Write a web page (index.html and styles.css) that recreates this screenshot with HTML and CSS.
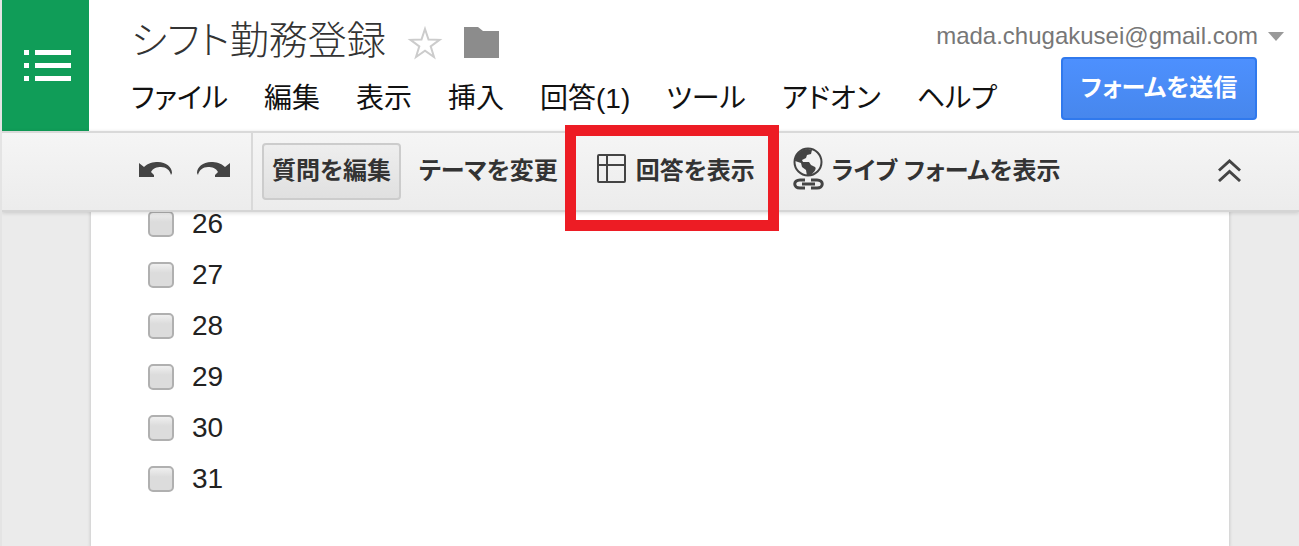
FILE: index.html
```html
<!DOCTYPE html>
<html lang="ja">
    <head>
        <meta charset="utf-8">
        <title>シフト勤務登録</title>
        <link rel="stylesheet" href="styles.css">
    </head>

    <body>
        <header class="header">
            <a class="logo" href="#" aria-label="フォーム">
                <svg width="48" height="34" viewBox="0 0 48 34" fill="#fff">
                    <path d="M0 1h5v5H0zM11 1h36v5H11zM0 14h5v5H0zM11 14h36v5H11zM0 27h5v5H0zM11 27h36v5H11z"/>
                </svg>
            </a>

            <div class="heading">
                <div class="title-row">
                    <h1>シフト勤務登録</h1>
                    <button class="icon-btn" aria-label="スター">
                        <svg width="36" height="36" viewBox="0 0 36 36">
                            <path d="M18 5l3.500 10.500 11 .3-8.800 6.600 3.300 10.600L18 26.800l-9 6.200 3.300-10.600L3.500 15.800l11-.3z" fill="none" stroke="#ccc" stroke-width="2"/>
                        </svg>
                    </button>
                    <button class="icon-btn" aria-label="フォルダ">
                        <svg width="36" height="32" viewBox="0 0 36 32">
                            <path d="M0 1h14l5 4h16v27H0z" fill="#8c8c8c"/>
                        </svg>
                    </button>
                    <button class="user">
                        mada.chugakusei@gmail.com
                        <svg width="16" height="10" viewBox="0 0 16 10"><path d="M0 1h16L8 10z" fill="#999"/></svg>
                    </button>
                </div>
                <div class="menu-row">
                    <nav class="menu">
                        <a href="#">ファイル</a>
                        <a href="#">編集</a>
                        <a href="#">表示</a>
                        <a href="#">挿入</a>
                        <a href="#">回答(1)</a>
                        <a href="#">ツール</a>
                        <a href="#">アドオン</a>
                        <a href="#">ヘルプ</a>
                    </nav>
                    <button class="send">フォームを送信</button>
                </div>
            </div>
        </header>

        <div class="toolbar">
            <div class="history">
                <button class="icon-btn" aria-label="元に戻す">
                    <svg width="34" height="18" viewBox="0 0 34 18">
                        <path d="M0 2l5 4C9 2 14 1 19 1c8 0 14 5 14 11l-1 2c-1-5-5-8-10-8-4 0-8 1-10 5l3 3v2H0z" fill="#444"/>
                    </svg>
                </button>
                <button class="icon-btn" aria-label="やり直し">
                    <svg width="34" height="18" viewBox="0 0 34 18">
                        <path d="M34 2l-5 4C25 2 20 1 15 1 7 1 1 6 1 12l1 2c1-5 5-8 10-8 4 0 8 1 10 5l-3 3v2h15z" fill="#444"/>
                    </svg>
                </button>
            </div>
            <div class="tools">
                <button class="tool active">質問を編集</button>
                <button class="tool">テーマを変更</button>
                <button class="tool responses">
                    <svg width="30" height="30" viewBox="0 0 30 30" fill="none" stroke="#444" stroke-width="2">
                        <rect x="1" y="1" width="27" height="27" rx="1"/>
                        <path d="M1 11h27M10 1v27"/>
                    </svg>
                    回答を表示
                    <span class="highlight"></span>
                </button>
                <button class="tool live">
                    <svg width="31" height="43" viewBox="0 0 31 43" fill="none" stroke="#444">
                        <circle cx="15" cy="15" r="13.500" stroke-width="2"/>
                        <path d="M2 14C2 8 8 2 15 2l4 1-1 4-4 1-1 3-4 2 1 2h6l2 3 4 2c2 2-1 5-4 8l-4 1-1-6-4-3-1-4z" fill="#444" stroke="none"/>
                        <path d="M12 33H7c-7 0-7 8 0 8h5M18 33h6c7 0 7 8 0 8h-6M9 37h13" stroke-width="3"/>
                    </svg>
                    ライブ フォームを表示
                </button>
            </div>
            <button class="icon-btn collapse" aria-label="メニューを隠す">
                <svg width="23" height="23" viewBox="0 0 24 24" fill="none" stroke="#444" stroke-width="3">
                    <path d="M1 12L12 2l11 10M1 23l11-10 11 10"/>
                </svg>
            </button>
        </div>

        <main class="content">
            <div class="paper">
                <div class="choices">
                    <label><input type="checkbox">26</label>
                    <label><input type="checkbox">27</label>
                    <label><input type="checkbox">28</label>
                    <label><input type="checkbox">29</label>
                    <label><input type="checkbox">30</label>
                    <label><input type="checkbox">31</label>
                </div>
            </div>
        </main>
    </body>
</html>
```
FILE: styles.css
```css
*{
    box-sizing: border-box;
}
body{
    margin: 0;
    min-height: 100vh;
    display: flex;
    flex-direction: column;
    border-left: 2px solid #e4e4e4;
    background-color: #ebebeb;
    font-family: "Liberation Sans", "Noto Sans CJK JP", sans-serif;
    font-feature-settings: "palt";
}
button{
    font-family: inherit;
    font-feature-settings: inherit;
    border: none;
    background: none;
    padding: 0;
    white-space: nowrap;
    cursor: pointer;
}
a{
    color: inherit;
    text-decoration: none;
}
svg{
    display: block;
    flex: none;
}

/* header */
.header{
    display: flex;
    height: 131px;
    background-color: #fff;
}
.logo{
    flex: none;
    width: 87px;
    padding-left: 22px;
    display: flex;
    align-items: center;
    background-color: #109d58;
}
.heading{
    flex: 1;
    padding: 15px 15px 0 42px;
}
.title-row{
    display: flex;
    align-items: center;
    gap: 21px;
    height: 42px;
}
h1{
    margin: 0;
    padding-top: 10px;
    font-size: 39px;
    font-weight: 300;
    line-height: 52px;
    color: #333;
    white-space: nowrap;
}
.title-row .icon-btn{
    padding-top: 12px;
}
.user{
    display: flex;
    align-items: center;
    gap: 10px;
    margin-left: auto;
    font-size: 24px;
    color: #777;
}
.menu-row{
    display: flex;
    justify-content: space-between;
    align-items: flex-start;
}
.menu{
    display: flex;
    gap: 36px;
    padding-top: 22px;
    font-size: 28px;
    line-height: 40px;
    color: #111;
    white-space: nowrap;
}
.send{
    width: 196px;
    height: 63px;
    margin-right: 27px;
    padding-bottom: 6px;
    border: 2px solid #3079ed;
    border-radius: 4px;
    background: linear-gradient(#4d90fe, #4787ed);
    color: #fff;
    font-size: 24px;
    font-weight: bold;
}

/* toolbar */
.toolbar{
    display: flex;
    height: 81px;
    border-top: 2px solid #d9d9d9;
    border-bottom: 2px solid #d5d5d5;
    background: linear-gradient(#f5f5f5, #ececec);
    box-shadow: 0 1px 4px rgba(0, 0, 0, 0.15);
    position: relative;
}
.history{
    display: flex;
    align-items: center;
    gap: 23px;
    width: 251px;
    padding: 0 0 4px 137px;
    border-right: 2px solid #d9d9d9;
}
.tools{
    display: flex;
    align-items: center;
    padding-left: 9px;
}
.tool{
    display: flex;
    align-items: center;
    height: 57px;
    padding: 0 8px 6px;
    border: 2px solid transparent;
    border-radius: 4px;
    color: #333;
    font-size: 24px;
    font-weight: bold;
}
.active{
    margin-right: 8px;
    border-color: #ccc;
    background: linear-gradient(#eee, #e0e0e0);
}
.responses{
    gap: 9px;
    margin-left: 19px;
    position: relative;
}
.highlight{
    position: absolute;
    top: -20px;
    left: -24px;
    right: -16px;
    bottom: -33px;
    border: 11px solid #ed1c24;
    pointer-events: none;
}
.live{
    gap: 8px;
    margin-left: 18px;
}
.collapse{
    margin: 0 58px 0 auto;
    padding-bottom: 2px;
}

/* form page */
.content{
    flex: 1;
    display: flex;
    padding: 0 70px 0 89px;
}
.paper{
    flex: 1;
    padding-left: 57px;
    background-color: #fff;
    box-shadow: 0 0 3px 1px #ccc;
}
.choices{
    display: flex;
    flex-direction: column;
    align-items: flex-start;
    margin-top: -14px;
}
.choices label{
    display: flex;
    align-items: center;
    gap: 18px;
    height: 51px;
    color: #222;
    font-size: 28px;
}
.choices input{
    appearance: none;
    width: 26px;
    height: 26px;
    margin: 0;
    border: 2px solid #b0b0b0;
    border-radius: 5px;
    background: linear-gradient(#efefef, #dcdcdc 40%);
}
```
